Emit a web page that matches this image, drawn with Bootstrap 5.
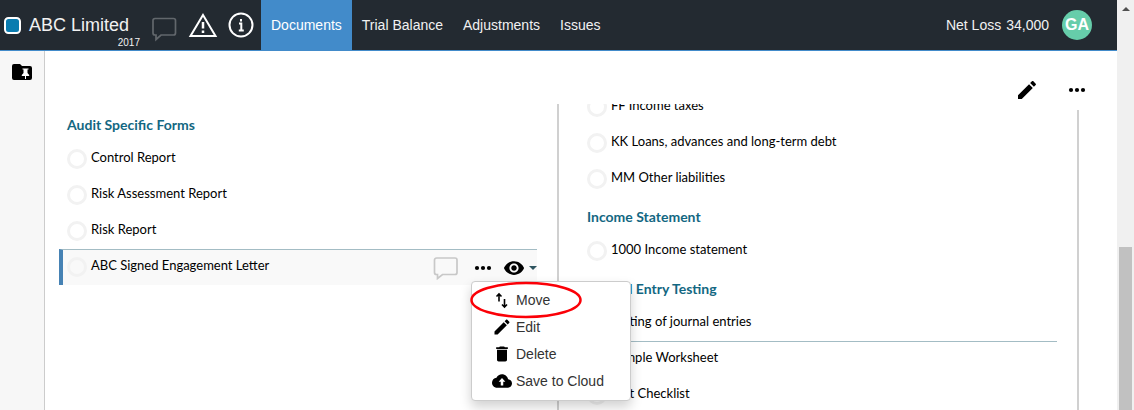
<!DOCTYPE html>
<html lang="en">
<head>
<meta charset="utf-8">
<meta name="viewport" content="width=device-width, initial-scale=1">
<title>ABC Limited - Documents</title>
<link href="https://cdn.jsdelivr.net/npm/bootstrap@5.3.0/dist/css/bootstrap.min.css" rel="stylesheet">
<style>
  body { font-family: "Liberation Sans", Arial, sans-serif; font-size: 14px; line-height: 20px; color: #000; }
  svg { display: block; flex: none; }
  .icon-btn { background: none; border: 0; padding: 0; color: #000; }

  .topbar { height: 51px; background: #232a31; border-bottom: 1px solid #428bca; color: #f1f1f1; }
  .brand { color: #f1f1f1; font-size: 18px; width: 136px; margin-left: 4px; gap: 8px; }
  .brand .year { right: 0; top: 33px; font-size: 10px; }
  .topbar .icon-btn { color: #fff; }
  .status-icons { gap: 10px; margin: 0 7px 0 8px; }
  .topbar .nav-link { color: #f1f1f1; padding: 0 10px; line-height: 50px; border-radius: 0; }
  .topbar .nav-link.active { background: #428bca; color: #fff; }
  .avatar { width: 30px; height: 30px; background: #66cdaa; color: #fff; font-size: 16px; }
  .account { margin-right: 25px; gap: 5px; }

  .side { width: 45px; background: #f7f7f7; border-right: 1px solid #ccc; padding-top: 11px; }
  .tools { height: 53px; padding-top: 27px; padding-right: 30px; gap: 28px; }
  .board { display: grid; grid-template-columns: 1fr 2px 1fr 2px; column-gap: 20px; padding-left: 14px; padding-right: 38px; min-height: 0; }
  .divider { background: #d0d0d0; }
  .divider-end { margin-top: 6px; }

  .doc-list { font-family: Lato, sans-serif; font-size: 13px; }
  .doc-list.at-start { padding-top: 1px; }
  .scrolled { margin-top: -15px; }
  .doc-list h2 { font-size: 14px; font-weight: 700; line-height: 36px; height: 36px; color: #136782; margin: 0; padding: 2px 0 0 8px; }
  .doc-row { height: 36px; border-top: 1px solid transparent; padding-left: 8px; gap: 4px; }
  .doc-row label { line-height: 30px; }
  .doc-row input { appearance: none; width: 20px; height: 20px; margin: 7px 0 0; border: 3px solid #f2f2f2; border-radius: 50%; flex: none; }
  .doc-row.ruled { border-top-color: #a3bcc4; }
  .doc-row.current { background: #f9f9f9; border-top-color: #a3bcc4; padding-left: 4px; border-left: 4px solid #4682b4; }
  .row-actions { height: 35px; gap: 10px; }

  .row-menu { left: 408px; top: 31px; width: 160px; padding: 4px 0 6px; border: 1px solid #ccc; border-radius: 4px; background: #fff; box-shadow: 0 6px 12px rgba(0,0,0,.18); z-index: 10; font-family: "Liberation Sans", Arial, sans-serif; font-size: 14px; }
  .row-menu button { display: flex; align-items: center; width: 100%; height: 27px; gap: 4px; padding: 0 20px; border: 0; background: none; color: #333; white-space: nowrap; }
  .row-menu svg { color: #000; }
  .row-menu .callout { left: -2px; top: -1px; }

  .scroll-track { width: 17px; background: #f0f0f0; padding: 7px 2px 0; }
  .scroll-thumb { background: #c1c1c1; margin-top: 236px; }
</style>
</head>
<body>
<div class="d-flex vh-100 overflow-hidden">
  <div class="d-flex flex-column flex-grow-1">
    <header class="topbar d-flex flex-shrink-0">
      <a class="brand d-flex align-items-center position-relative text-decoration-none text-nowrap" href="#">
        <svg width="17" height="17" viewBox="0 0 17 17"><rect x="1" y="1" width="15" height="15" rx="3.500" fill="#0a7cb0" stroke="#fff" stroke-width="2"/></svg>
        <span>ABC Limited</span>
        <span class="year position-absolute">2017</span>
      </a>
      <div class="status-icons d-flex align-items-center">
        <button class="icon-btn ms-1 mt-2" aria-label="Comments"><svg width="26" height="26" viewBox="0 0 26 26" fill="none" stroke="#62676c" stroke-width="1.700"><path d="M3 2.500h18.500a2 2 0 0 1 2 2V17a2 2 0 0 1-2 2H9l-5 4.500V19H3a2 2 0 0 1-2-2V4.500a2 2 0 0 1 2-2z"/></svg></button>
        <button class="icon-btn" aria-label="Warnings"><svg width="30" height="26" viewBox="0 0 30 26" fill="none" stroke="#fff"><path d="M15 3 27.500 24H2.500z" stroke-width="2"/><path d="M15 10v6.500M15 18.500v2.500" stroke-width="2.500"/></svg></button>
        <button class="icon-btn" aria-label="Information"><svg width="26" height="26" viewBox="0 0 26 26" fill="none" stroke="#fff"><circle cx="13" cy="13" r="11.500" stroke-width="2"/><path d="M13 7v2.500M11 11.500h2.300v7M10.800 18.500h5" stroke-width="2"/></svg></button>
      </div>
      <nav class="nav flex-nowrap">
        <a class="nav-link active" href="#">Documents</a>
        <a class="nav-link" href="#">Trial Balance</a>
        <a class="nav-link" href="#">Adjustments</a>
        <a class="nav-link" href="#">Issues</a>
      </nav>
      <div class="account d-flex align-items-center ms-auto text-nowrap">
        <span>Net Loss</span><span>34,000</span>
        <button class="avatar border-0 rounded-circle fw-bold p-0 ms-2">GA</button>
      </div>
    </header>
    <div class="d-flex flex-grow-1">
      <aside class="side flex-shrink-0 d-flex justify-content-center align-items-start">
        <button class="icon-btn" aria-label="Pinned folder"><svg width="20" height="20" viewBox="0 0 20 20"><path d="M2 2h6l2 2h8a2 2 0 0 1 2 2v10a2 2 0 0 1-2 2H2a2 2 0 0 1-2-2V4a2 2 0 0 1 2-2z"/><path fill="#fff" d="M10.500 6.500h6v1h-1V11l1.700 2v1h-3.200v3h-1v-3H9.800v-1l1.700-2V7.500h-1z"/></svg></button>
      </aside>
      <main class="flex-grow-1 d-flex flex-column">
        <div class="tools d-flex justify-content-end align-items-start">
          <button class="icon-btn" aria-label="Edit"><svg width="24" height="24" viewBox="0 0 24 24"><path d="M3 17.250V21h3.750L17.810 9.940l-3.750-3.750L3 17.250zM20.710 7.040c.39-.39.39-1.020 0-1.410l-2.340-2.340c-.39-.39-1.020-.39-1.410 0l-1.830 1.830 3.750 3.750 1.830-1.830z"/></svg></button>
          <button class="icon-btn" aria-label="More"><svg width="20" height="24" viewBox="0 0 20 24"><circle cx="4" cy="12" r="2.100"/><circle cx="10" cy="12" r="2.100"/><circle cx="16" cy="12" r="2.100"/></svg></button>
        </div>
        <div class="board flex-grow-1">
          <section class="doc-list at-start">
            <h2>Audit Specific Forms</h2>
            <div class="doc-row d-flex align-items-start"><input type="checkbox" id="d1"><label for="d1">Control Report</label></div>
            <div class="doc-row d-flex align-items-start"><input type="checkbox" id="d2"><label for="d2">Risk Assessment Report</label></div>
            <div class="doc-row d-flex align-items-start"><input type="checkbox" id="d3"><label for="d3">Risk Report</label></div>
            <div class="doc-row current d-flex align-items-start position-relative">
              <input type="checkbox" id="d4"><label for="d4">ABC Signed Engagement Letter</label>
              <div class="row-actions d-flex align-items-center ms-auto">
                <button class="icon-btn me-1" aria-label="Comment"><svg width="26" height="24" viewBox="0 0 26 24" fill="none" stroke="#c8c8c8" stroke-width="1.700"><path d="M3.500 2H22a2 2 0 0 1 2 2v12.500a2 2 0 0 1-2 2H9.500l-5 4V18.500h-1a2 2 0 0 1-2-2V4a2 2 0 0 1 2-2z"/></svg></button>
                <button class="icon-btn" aria-label="More actions"><svg width="20" height="24" viewBox="0 0 20 24"><circle cx="4" cy="12" r="2.100"/><circle cx="10" cy="12" r="2.100"/><circle cx="16" cy="12" r="2.100"/></svg></button>
                <button class="icon-btn d-flex align-items-center gap-1" aria-label="Visibility"><svg width="22" height="22" viewBox="0 0 24 24"><path d="M12 4.500C7 4.500 2.730 7.610 1 12c1.730 4.390 6 7.500 11 7.500s9.270-3.110 11-7.500c-1.730-4.390-6-7.500-11-7.500zM12 17c-2.760 0-5-2.240-5-5s2.240-5 5-5 5 2.240 5 5-2.240 5-5 5zm0-8c-1.660 0-3 1.340-3 3s1.340 3 3 3 3-1.340 3-3-1.340-3-3-3z"/></svg><svg width="8" height="4" viewBox="0 0 8 4"><path fill="#2f5560" d="M0 0h8L4 4z"/></svg></button>
              </div>
              <div class="row-menu position-absolute">
                <button><svg width="20" height="20" viewBox="0 0 20 20" fill="none" stroke="#000" stroke-width="1.600"><path d="M7 11.500V4M4.500 6.500 7 4l2.500 2.500M12.500 9v8M10 14.500l2.500 2.500 2.500-2.500"/></svg>Move</button>
                <button><svg width="20" height="20" viewBox="0 0 24 24"><path d="M3 17.250V21h3.750L17.810 9.940l-3.750-3.750L3 17.250zM20.710 7.040c.39-.39.39-1.020 0-1.410l-2.340-2.340c-.39-.39-1.020-.39-1.410 0l-1.830 1.830 3.750 3.750 1.830-1.830z"/></svg>Edit</button>
                <button><svg width="20" height="20" viewBox="0 0 24 24"><path d="M6 19c0 1.100.9 2 2 2h8c1.100 0 2-.9 2-2V7H6v12zM19 4h-3.500l-1-1h-5l-1 1H5v2h14V4z"/></svg>Delete</button>
                <button><svg width="20" height="20" viewBox="0 0 24 24"><path fill-rule="evenodd" d="M19.350 10.040C18.670 6.590 15.640 4 12 4 9.110 4 6.600 5.640 5.350 8.040 2.340 8.360 0 10.910 0 14c0 3.310 2.690 6 6 6h13c2.760 0 5-2.240 5-5 0-2.640-2.050-4.780-4.650-4.960zM13.500 13v4.500h-3V13H8l4-4.500 4 4.500z"/></svg>Save to Cloud</button>
                <svg class="callout position-absolute pe-none" width="112" height="38" viewBox="0 0 112 38"><ellipse cx="56" cy="19" rx="54.500" ry="17" fill="none" stroke="#fb0007" stroke-width="2.500"/></svg>
              </div>
            </div>
          </section>
          <div class="divider"></div>
          <section class="doc-list overflow-hidden">
            <div class="scrolled">
              <div class="doc-row d-flex align-items-start"><input type="checkbox" id="e1"><label for="e1">FF Income taxes</label></div>
              <div class="doc-row d-flex align-items-start"><input type="checkbox" id="e2"><label for="e2">KK Loans, advances and long-term debt</label></div>
              <div class="doc-row d-flex align-items-start"><input type="checkbox" id="e3"><label for="e3">MM Other liabilities</label></div>
              <h2>Income Statement</h2>
              <div class="doc-row d-flex align-items-start"><input type="checkbox" id="e4"><label for="e4">1000 Income statement</label></div>
              <h2>Journal Entry Testing</h2>
              <div class="doc-row d-flex align-items-start"><input type="checkbox" id="e5"><label for="e5">Testing of journal entries</label></div>
              <div class="doc-row ruled d-flex align-items-start"><input type="checkbox" id="e6"><label for="e6">Sample Worksheet</label></div>
              <div class="doc-row d-flex align-items-start"><input type="checkbox" id="e7"><label for="e7">Test Checklist</label></div>
            </div>
          </section>
          <div class="divider divider-end"></div>
        </div>
      </main>
    </div>
  </div>
  <div class="scroll-track d-flex flex-column flex-shrink-0" aria-hidden="true">
    <svg class="mx-auto" width="8" height="4" viewBox="0 0 8 4"><path fill="#505050" d="M4 0l4 4H0z"/></svg>
    <div class="scroll-thumb flex-grow-1"></div>
  </div>
</div>
<script src="https://cdn.jsdelivr.net/npm/bootstrap@5.3.0/dist/js/bootstrap.bundle.min.js"></script>
</body>
</html>
